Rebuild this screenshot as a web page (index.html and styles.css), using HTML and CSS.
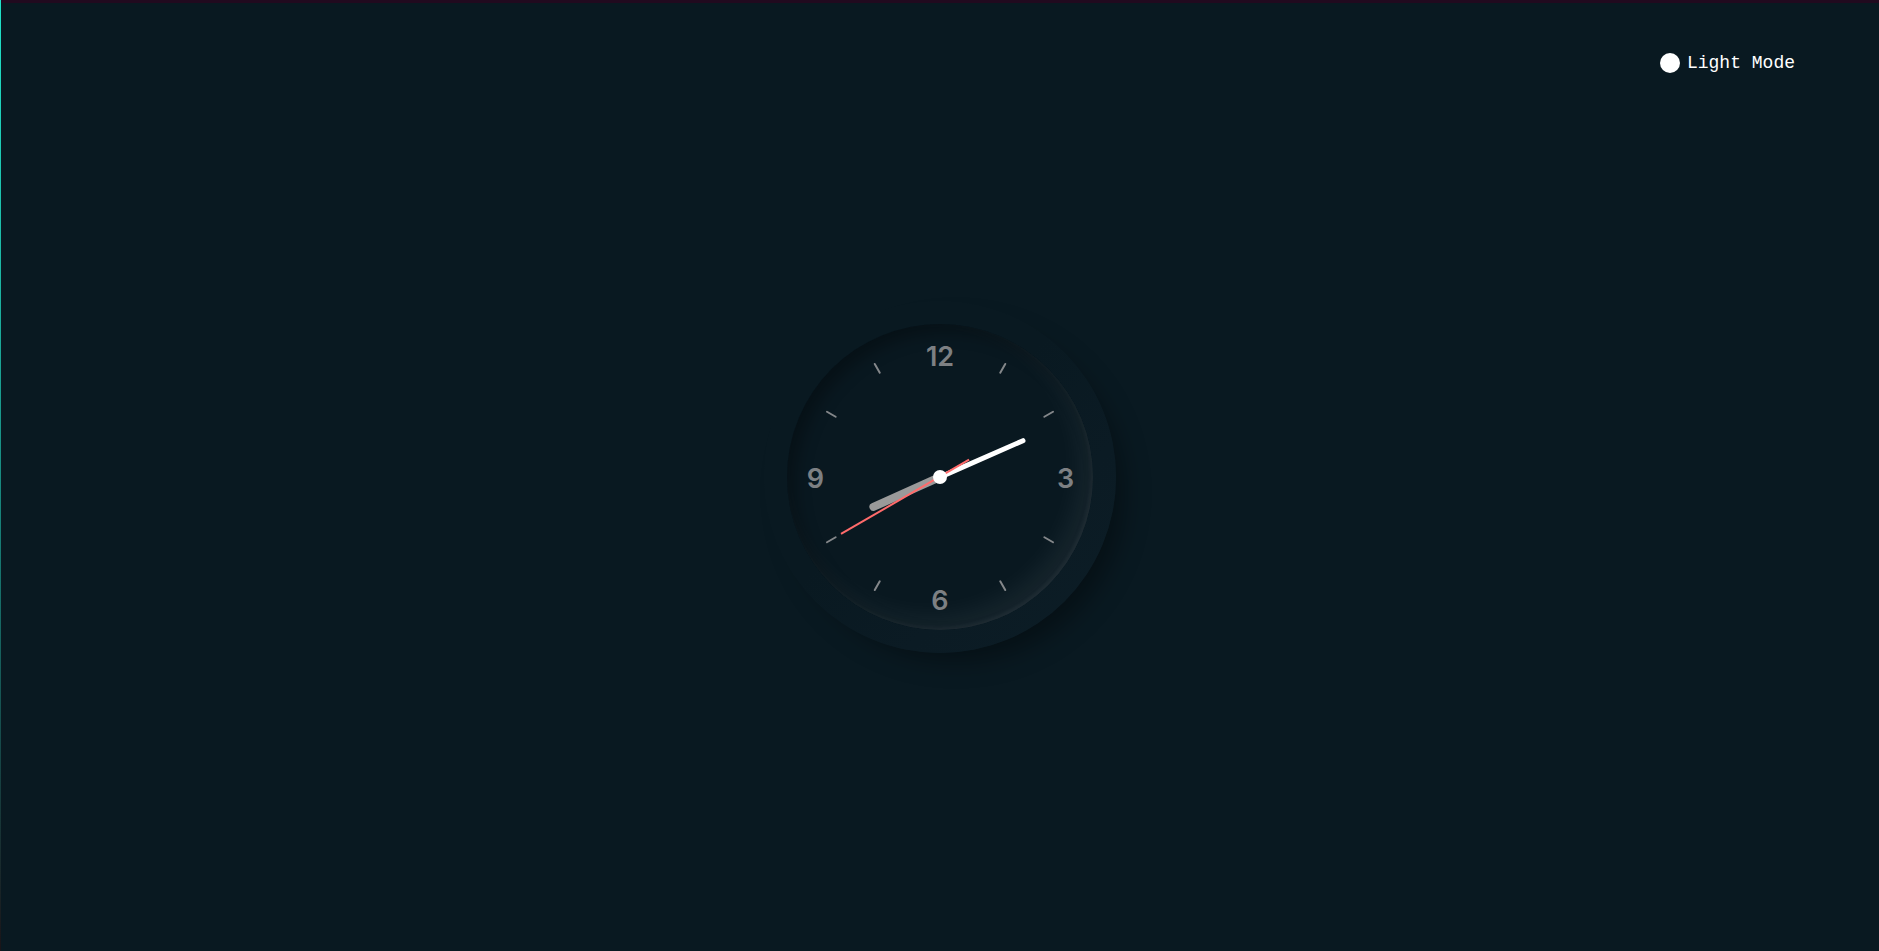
FILE: index.html
```html
<!DOCTYPE html>
<html lang="en">
<head>
<meta charset="utf-8">
<title>Clock</title>
<link rel="stylesheet" href="styles.css">
</head>
<body>
<div class="page">
  <div class="edge"></div>
  <main class="stage">
    <button class="mode-toggle" type="button">
      <span class="mode-dot"></span>
      <span class="mode-label">Light Mode</span>
    </button>
    <div class="clock">
      <div class="face">
        <span class="tick t1"></span>
        <span class="tick t2"></span>
        <span class="tick t4"></span>
        <span class="tick t5"></span>
        <span class="tick t7"></span>
        <span class="tick t8"></span>
        <span class="tick t10"></span>
        <span class="tick t11"></span>
        <span class="num n12">12</span>
        <span class="num n3">3</span>
        <span class="num n6">6</span>
        <span class="num n9">9</span>
        <span class="hand hour"></span>
        <span class="hand minute"></span>
        <span class="hand second"></span>
        <span class="pin"></span>
      </div>
    </div>
  </main>
</div>
</body>
</html>
```

FILE: styles.css
```css
* { box-sizing: border-box; }

html, body {
  margin: 0;
  padding: 0;
  height: 100%;
  background: #091921;
}

.page {
  display: flex;
  height: 100vh;
  overflow: hidden;
}

.edge {
  width: 1px;
  flex: 0 0 1px;
  background: linear-gradient(180deg, #20e3c9 0%, #1cb4a2 30%, #178078 55%, #164a4a 78%, #1a1418 100%);
}

.stage {
  flex: 1;
  position: relative;
  border-top: 3px solid #210a1f;
  background: #091921;
  display: grid;
  place-items: center;
}

.mode-toggle {
  position: absolute;
  top: 50px;
  right: 84px;
  display: flex;
  align-items: center;
  gap: 7px;
  padding: 0;
  margin: 0;
  border: 0;
  background: none;
  color: #ffffff;
  font-family: "Liberation Mono", "Courier New", monospace;
  font-size: 18px;
  line-height: 20px;
  cursor: pointer;
}

.mode-dot {
  width: 20px;
  height: 20px;
  border-radius: 50%;
  background: #ffffff;
}

.clock {
  width: 352px;
  height: 352px;
  border-radius: 50%;
  display: grid;
  place-items: center;
  background: linear-gradient(135deg, #091921 45%, #0b1b24 70%, #0c1d26 100%);
  box-shadow: 16px 16px 26px -8px rgba(0, 0, 0, 0.35);
}

.face {
  position: relative;
  width: 306px;
  height: 306px;
  border-radius: 50%;
  background: #091820;
  box-shadow:
    inset 8px 8px 16px rgba(0, 0, 0, 0.3),
    inset -2px -2px 4px rgba(255, 255, 255, 0.05),
    inset -12px -12px 26px rgba(255, 255, 255, 0.06);
}

.tick {
  position: absolute;
  left: calc(50% - 1px);
  top: calc(50% - 6px);
  width: 2px;
  height: 12px;
  border-radius: 1px;
  background: #84878a;
}
.t1 { transform: rotate(30deg) translateY(-125.5px); }
.t2 { transform: rotate(60deg) translateY(-125.5px); }
.t4 { transform: rotate(120deg) translateY(-125.5px); }
.t5 { transform: rotate(150deg) translateY(-125.5px); }
.t7 { transform: rotate(210deg) translateY(-125.5px); }
.t8 { transform: rotate(240deg) translateY(-125.5px); }
.t10 { transform: rotate(300deg) translateY(-125.5px); }
.t11 { transform: rotate(330deg) translateY(-125.5px); }

.num {
  position: absolute;
  left: 50%;
  top: 50%;
  font-family: Inter, "Noto Sans", sans-serif;
  font-weight: 600;
  font-size: 27px;
  line-height: 27px;
  color: #7d8083;
}
.n12 { transform: translate(-50%, -50%) translate(0, -121px); }
.n3 { transform: translate(-50%, -50%) translate(125.5px, 1px); }
.n6 { transform: translate(-50%, -50%) translate(0, 123px); }
.n9 { transform: translate(-50%, -50%) translate(-124.5px, 1px); }

.hand {
  position: absolute;
  bottom: 50%;
  transform-origin: 50% 100%;
  border-radius: 999px;
}

.hour {
  left: calc(50% - 4px);
  width: 8px;
  height: 81px;
  bottom: calc(50% - 4px);
  transform-origin: 50% calc(100% - 4px);
  background: #9a9a9a;
  transform: rotate(245.8deg);
}

.minute {
  left: calc(50% - 2.25px);
  width: 4.5px;
  height: 95px;
  bottom: calc(50% - 2.25px);
  transform-origin: 50% calc(100% - 2.25px);
  background: #ffffff;
  transform: rotate(66.3deg);
}

.second {
  left: calc(50% - 0.75px);
  width: 1.5px;
  height: 148px;
  bottom: calc(50% - 34px);
  transform-origin: 50% calc(100% - 34px);
  border-radius: 0;
  background: #ff6b6b;
  transform: rotate(239.9deg);
}

.pin {
  position: absolute;
  left: calc(50% - 7px);
  top: calc(50% - 7px);
  width: 14px;
  height: 14px;
  border-radius: 50%;
  background: #ffffff;
}
```
